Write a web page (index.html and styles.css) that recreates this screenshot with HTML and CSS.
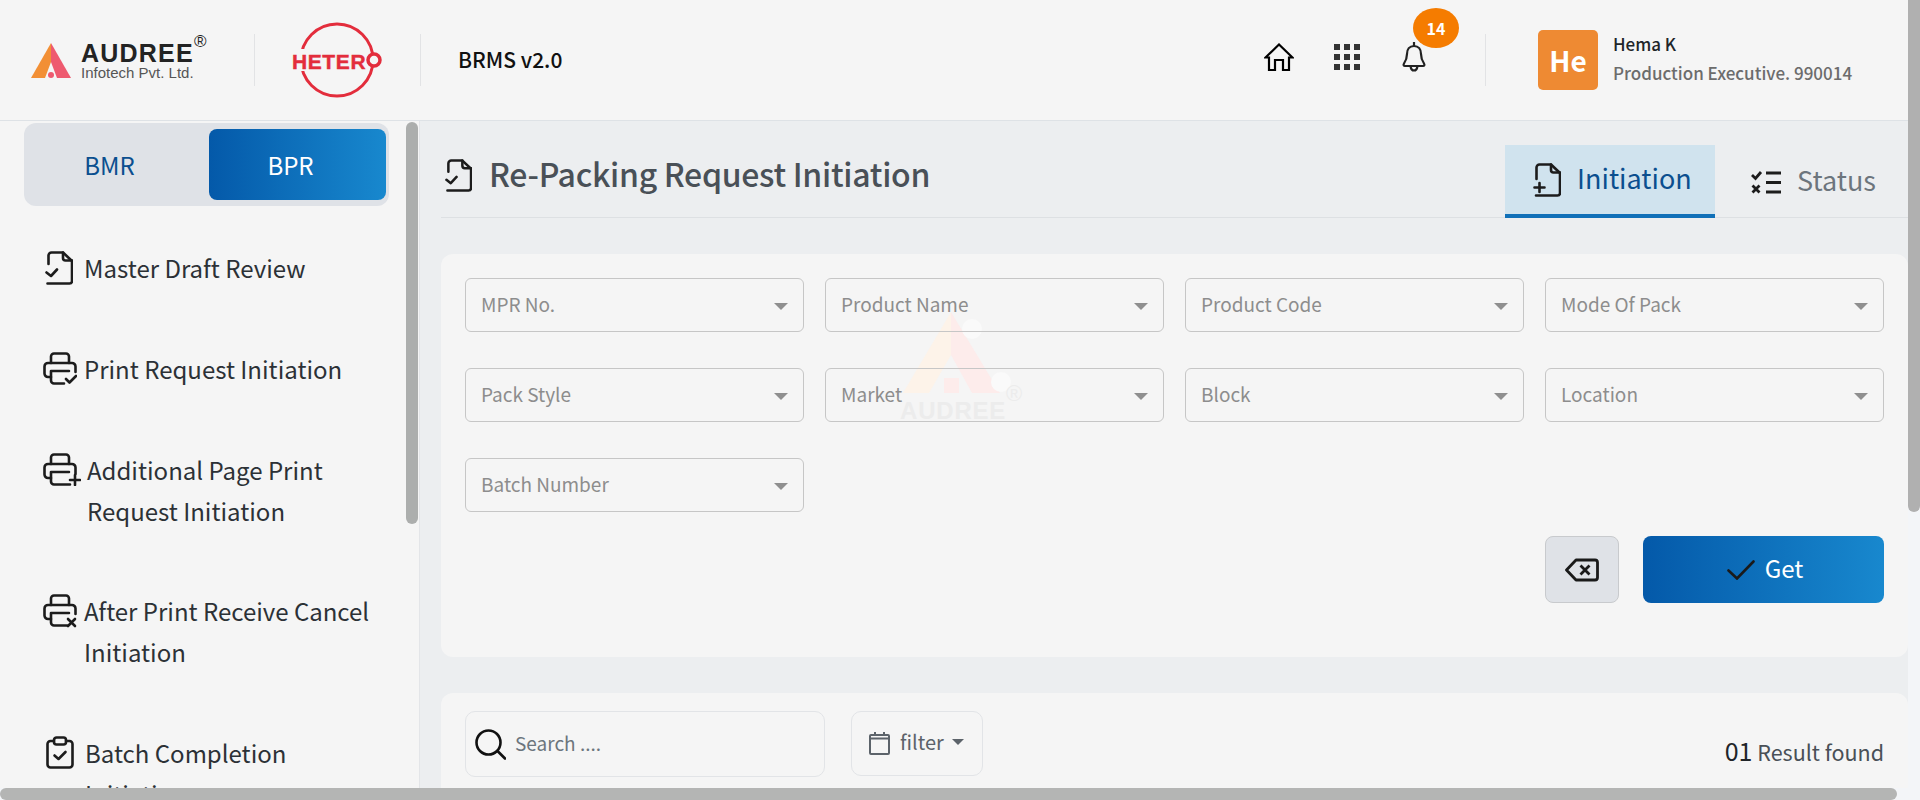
FILE: index.html
```html
<!DOCTYPE html>
<html lang="en">
<head>
    <meta charset="UTF-8">
    <meta name="viewport" content="width=device-width, initial-scale=1.0">
    <title>BRMS v2.0</title>
    <link rel="stylesheet" href="styles.css">
</head>
<body>
    <div class="page">
        <header class="topbar">
            <div class="brand">
                <svg class="brand-mark" width="40" height="35" viewBox="0 0 40 35">
                    <polygon points="20,0 0,35 14,35 20,19" fill="#f28f35"/>
                    <polygon points="20,0 40,35 26,35 20,19" fill="#ee5a6f"/>
                    <circle cx="20" cy="32" r="3" fill="#ee5a6f"/>
                </svg>
                <div class="brand-text">
                    <div class="brand-name">AUDREE<span class="brand-reg">®</span></div>
                    <div class="brand-sub">Infotech Pvt. Ltd.</div>
                </div>
            </div>
            <div class="divider"></div>
            <div class="client-logo">
                <svg width="92" height="78" viewBox="0 0 92 78">
                    <ellipse cx="45" cy="39" rx="36" ry="36" fill="none" stroke="#e32d3c" stroke-width="3"/>
                    <rect x="0" y="28" width="76" height="22" fill="#f5f5f5"/>
                    <text x="0" y="48" class="client-text">HETER</text>
                    <circle cx="82" cy="39" r="6" fill="#f5f5f5" stroke="#e32d3c" stroke-width="3.500"/>
                </svg>
            </div>
            <div class="divider"></div>
            <div class="app-name">BRMS v2.0</div>

            <div class="top-icons">
                <svg width="30" height="28" viewBox="0 0 30 28" fill="none" stroke="#000" stroke-width="2.200" stroke-linejoin="miter">
                    <path d="M1.500 14.500 15 1.500l13.500 13H25V27h-6V17h-8v10H5V14.500z"/>
                </svg>
                <svg class="apps-icon" width="26" height="26" viewBox="0 0 26 26" fill="#333">
                    <rect width="6" height="6"/><rect x="10" width="6" height="6"/><rect x="20" width="6" height="6"/>
                    <rect y="10" width="6" height="6"/><rect x="10" y="10" width="6" height="6"/><rect x="20" y="10" width="6" height="6"/>
                    <rect y="20" width="6" height="6"/><rect x="10" y="20" width="6" height="6"/><rect x="20" y="20" width="6" height="6"/>
                </svg>
                <div class="bell">
                    <svg width="24" height="30" viewBox="0 0 24 30" fill="none" stroke="#222" stroke-width="2.200">
                        <path d="M12 0v4"/>
                        <path d="M12 4c-4.500 0-7 3.500-7 8 0 4.500-1 6.500-3 9.500-.9 1.400-.3 2.500 1 2.500h18c1.300 0 1.900-1.100 1-2.500-2-3-3-5-3-9.500 0-4.500-2.500-8-7-8z"/>
                        <path d="M8.500 24c.3 2.500 1.700 4.500 3.500 4.500s3.200-2 3.500-4.500"/>
                    </svg>
                    <span class="badge">14</span>
                </div>
            </div>
            <div class="divider"></div>
            <div class="user">
                <div class="avatar">He</div>
                <div class="user-info">
                    <div class="user-name">Hema K</div>
                    <div class="user-role">Production Executive. 990014</div>
                </div>
            </div>
        </header>

        <div class="content">
            <aside class="sidebar">
                <div class="switch">
                    <div class="switch-item">BMR</div>
                    <div class="switch-item active">BPR</div>
                </div>
                <ul class="menu">
                    <li class="menu-item">
                        <svg class="menu-icon doc" width="28" height="34" viewBox="0 0 28 34" fill="none" stroke="#1c1c1c" stroke-width="2.600" stroke-linecap="round" stroke-linejoin="round">
                            <path d="M3.500 13V4.500a3 3 0 0 1 3-3H18l9 8.500v20a2.500 2.500 0 0 1-2.500 2.500H2.500"/>
                            <path d="M18 1.500V7a2.500 2.500 0 0 0 2.500 2.500H27"/>
                            <path d="M1.500 21.500 6 25l6-6.500"/>
                        </svg>
                        <span>Master Draft Review</span>
                    </li>
                    <li class="menu-item">
                        <svg class="menu-icon printer" width="34" height="33" viewBox="0 0 34 33" fill="none" stroke="#1c1c1c" stroke-width="2.600" stroke-linecap="round" stroke-linejoin="round">
                            <path d="M8 11V4.500A3 3 0 0 1 11 1.500h12a3 3 0 0 1 3 3V11"/>
                            <path d="M8 25H5a3.500 3.500 0 0 1-3.500-3.500v-7A3.500 3.500 0 0 1 5 11h24a3.500 3.500 0 0 1 3.500 3.500V20"/>
                            <path d="M26 19H8v9.500a3 3 0 0 0 3 3h10"/>
                            <path d="M23 27l3.500 3.500L33 24"/>
                        </svg>
                        <span>Print Request Initiation</span>
                    </li>
                    <li class="menu-item plus">
                        <svg class="menu-icon printer" width="38" height="33" viewBox="0 0 38 33" fill="none" stroke="#1c1c1c" stroke-width="2.600" stroke-linecap="round" stroke-linejoin="round">
                            <path d="M8 11V4.500A3 3 0 0 1 11 1.500h12a3 3 0 0 1 3 3V11"/>
                            <path d="M8 25H5a3.500 3.500 0 0 1-3.500-3.500v-7A3.500 3.500 0 0 1 5 11h24a3.500 3.500 0 0 1 3.500 3.500V21"/>
                            <path d="M26 19H8v9.500a3 3 0 0 0 3 3h16"/>
                            <path d="M32 22v10M27 27h10"/>
                        </svg>
                        <span>Additional Page Print Request Initiation</span>
                    </li>
                    <li class="menu-item">
                        <svg class="menu-icon printer" width="34" height="34" viewBox="0 0 34 34" fill="none" stroke="#1c1c1c" stroke-width="2.600" stroke-linecap="round" stroke-linejoin="round">
                            <path d="M8 11V4.500A3 3 0 0 1 11 1.500h12a3 3 0 0 1 3 3V11"/>
                            <path d="M8 25H5a3.500 3.500 0 0 1-3.500-3.500v-7A3.500 3.500 0 0 1 5 11h24a3.500 3.500 0 0 1 3.500 3.500V20"/>
                            <path d="M26 19H8v9.500a3 3 0 0 0 3 3h13"/>
                            <path d="M25 25l7 7M32 25l-7 7"/>
                        </svg>
                        <span>After Print Receive Cancel Initiation</span>
                    </li>
                    <li class="menu-item">
                        <svg class="menu-icon clip" width="28" height="33" viewBox="0 0 28 33" fill="none" stroke="#1c1c1c" stroke-width="2.600" stroke-linecap="round" stroke-linejoin="round">
                            <path d="M8 5H4.500a3 3 0 0 0-3 3v20.500a3 3 0 0 0 3 3h19a3 3 0 0 0 3-3V8a3 3 0 0 0-3-3H20"/>
                            <rect x="8" y="1.500" width="12" height="7" rx="2.500"/>
                            <path d="M8.500 19.500l4 3.500 7-7"/>
                        </svg>
                        <span>Batch Completion Initiation</span>
                    </li>
                </ul>
                <div class="side-thumb"></div>
            </aside>

            <main class="main">
                <div class="watermark">
                    <svg width="98" height="81" viewBox="0 0 98 81">
                        <polygon points="48,0 0,81 26,81 48,43" fill="#fdf3e9"/>
                        <polygon points="48,0 97,81 69,81 48,43" fill="#fdeceb"/>
                        <rect x="41" y="66" width="15" height="15" fill="#fdeceb"/>
                        <circle cx="69" cy="17" r="10" fill="#fafafa"/>
                        <circle cx="98" cy="70" r="10" fill="#fafafa"/>
                    </svg>
                    <div class="watermark-name">AUDREE<span class="watermark-reg">®</span></div>
                </div>

                <div class="title-bar">
                    <h1 class="page-title">
                        <svg width="27" height="33" viewBox="0 0 28 34" fill="none" stroke="#1c1c1c" stroke-width="2.600" stroke-linecap="round" stroke-linejoin="round">
                            <path d="M3.500 13V4.500a3 3 0 0 1 3-3H18l9 8.500v20a2.500 2.500 0 0 1-2.500 2.500H2.500"/>
                            <path d="M18 1.500V7a2.500 2.500 0 0 0 2.500 2.500H27"/>
                            <path d="M1.500 21.500 6 25l6-6.500"/>
                        </svg>
                        <span>Re-Packing Request Initiation</span>
                    </h1>
                    <div class="tabs">
                        <div class="tab active">
                            <svg width="28" height="34" viewBox="0 0 28 34" fill="none" stroke="#1c1c1c" stroke-width="2.600" stroke-linecap="round" stroke-linejoin="round">
                                <path d="M3.500 16V4.500a3 3 0 0 1 3-3H18l9 8.500v20a2.500 2.500 0 0 1-2.500 2.500H3"/>
                                <path d="M18 1.500V7a2.500 2.500 0 0 0 2.500 2.500H27"/>
                                <path d="M6.500 20v9M1.500 24.500h10"/>
                            </svg>
                            <span>Initiation</span>
                        </div>
                        <div class="tab">
                            <svg width="30" height="24" viewBox="0 0 30 24" fill="none" stroke="#1c1c1c" stroke-width="2.800">
                                <path d="M1 5l3.500 3.500L10 2"/>
                                <path d="M1.500 15.500l7 7M8.500 15.500l-7 7"/>
                                <path d="M15 3h15M15 12.500h15M15 22h15"/>
                            </svg>
                            <span>Status</span>
                        </div>
                    </div>
                </div>

                <section class="card filter-card">
                    <div class="fields">
                        <div class="field">MPR No.</div>
                        <div class="field">Product Name</div>
                        <div class="field">Product Code</div>
                        <div class="field">Mode Of Pack</div>
                        <div class="field">Pack Style</div>
                        <div class="field">Market</div>
                        <div class="field">Block</div>
                        <div class="field">Location</div>
                        <div class="field">Batch Number</div>
                    </div>
                    <div class="actions">
                        <button class="btn-clear">
                            <svg width="34" height="24" viewBox="0 0 34 24" fill="none" stroke="#1a1a1a" stroke-width="2.800" stroke-linejoin="round">
                                <path d="M11 2h19a2.500 2.500 0 0 1 2.500 2.500v15A2.500 2.500 0 0 1 30 22H11L1.500 12z"/>
                                <path d="M15.500 7.500l9 9M24.500 7.500l-9 9"/>
                            </svg>
                        </button>
                        <button class="btn-get">
                            <svg width="28" height="20" viewBox="0 0 28 20" fill="none" stroke="#1a1a1a" stroke-width="2.600" stroke-linecap="round">
                                <path d="M1.500 10.500 10 18.500 26.500 1.500"/>
                            </svg>
                            <span>Get</span>
                        </button>
                    </div>
                </section>

                <section class="card list-card">
                    <div class="search-box">
                        <svg width="31" height="31" viewBox="0 0 31 31" fill="none" stroke="#111" stroke-width="2.600" stroke-linecap="round">
                            <circle cx="13.500" cy="13.500" r="12"/>
                            <path d="M22.500 22 30 29.500"/>
                        </svg>
                        <span>Search ....</span>
                    </div>
                    <div class="filter-btn">
                        <svg width="21" height="23" viewBox="0 0 21 23" fill="none" stroke="#5c636a" stroke-width="2">
                            <path d="M1 6.500V21a1 1 0 0 0 1 1h17a1 1 0 0 0 1-1V6.500zM1 6.500V4a1 1 0 0 1 1-1h17a1 1 0 0 1 1 1v2.500"/>
                            <path d="M6 0v4M15 0v4"/>
                        </svg>
                        <span>filter</span>
                        <i class="caret"></i>
                    </div>
                    <div class="result"><b>01</b> Result found</div>
                </section>
            </main>
        </div>
    </div>
    <!-- custom scrollbars of the page -->
    <div class="page-thumb-v"></div>
    <div class="page-thumb-h"></div>
</body>
</html>
```

FILE: styles.css
```css
* {
    box-sizing: border-box;
}
html, body {
    margin: 0;
    height: 800px;
    overflow: hidden;
}
body {
    font-family: "Noto Sans CJK JP", "Noto Sans", sans-serif;
    background-color: #f3f5f8;
    color: #212529;
    position: relative;
}
.page {
    width: 1908px;
    height: 788px;
    overflow: hidden;
}

/* Top bar */
.topbar {
    height: 121px;
    display: flex;
    align-items: center;
    background-color: #f5f5f5;
    border-bottom: 1px solid #dee2e6;
    padding-left: 31px;
}
.brand {
    width: 223px;
    display: flex;
    align-items: flex-end;
    gap: 10px;
}
.brand-mark {
    margin-bottom: 2px;
}
.brand-name {
    font-family: "Liberation Sans", sans-serif;
    font-weight: 700;
    font-size: 25px;
    letter-spacing: 1.2px;
    line-height: 24px;
    color: #232323;
    position: relative;
}
.brand-reg {
    position: absolute;
    left: 113px;
    top: -11px;
    font-size: 17px;
    font-weight: 400;
    letter-spacing: 0;
}
.brand-sub {
    font-family: "Liberation Sans", sans-serif;
    font-size: 15px;
    line-height: 15px;
    color: #555;
}
.divider {
    width: 1px;
    height: 52px;
    background-color: #e2e3e5;
    flex: none;
}
.client-logo {
    width: 165px;
    padding-left: 37px;
    display: flex;
}
.client-text {
    font-family: "Liberation Sans", sans-serif;
    font-weight: 700;
    font-size: 21px;
    letter-spacing: 0.6px;
    fill: #e32d3c;
    stroke: #e32d3c;
    stroke-width: 0.4px;
}
.app-name {
    margin-left: 37px;
    margin-bottom: 2px;
    font-size: 21px;
    font-weight: 500;
    color: #111;
}
.top-icons {
    margin-left: auto;
    display: flex;
    align-items: center;
    gap: 40px;
    margin-right: 59px;
    padding-bottom: 7px;
}
.apps-icon {
    margin-right: 2px;
}
.bell {
    position: relative;
    display: flex;
}
.badge {
    position: absolute;
    left: 11px;
    top: -34px;
    width: 46px;
    height: 40px;
    border-radius: 50%;
    background-color: #f57c00;
    color: #fff;
    font-size: 16px;
    font-weight: 700;
    display: flex;
    align-items: center;
    justify-content: center;
}
.user {
    display: flex;
    align-items: center;
    gap: 15px;
    margin-left: 52px;
    width: 370px;
}
.avatar {
    width: 60px;
    height: 60px;
    border-radius: 5px;
    background-color: #ee8a33;
    color: #fff;
    font-size: 28px;
    font-weight: 700;
    display: flex;
    align-items: center;
    justify-content: center;
}
.user-info {
    margin-top: -2px;
}
.user-name {
    font-size: 17px;
    font-weight: 500;
    line-height: 28px;
    color: #212529;
}
.user-role {
    font-size: 17px;
    font-weight: 500;
    line-height: 30px;
    color: #6c6c6c;
}

/* Sidebar */
.content {
    display: flex;
    height: 667px;
}
.sidebar {
    width: 420px;
    flex: none;
    background-color: #f5f5f5;
    border-right: 1px solid #e3e5e8;
    position: relative;
    overflow: hidden;
    padding-left: 24px;
}
.switch {
    width: 365px;
    height: 83px;
    margin-top: 2px;
    padding: 6px 3px 6px 0;
    background-color: #dfe2e7;
    border-radius: 12px;
    display: flex;
}
.switch-item {
    width: 173px;
    margin-left: 6px;
    padding-right: 14px;
    border-radius: 8px;
    font-size: 24px;
    color: #0b4f8f;
    display: flex;
    align-items: center;
    justify-content: center;
}
.switch-item.active {
    width: 177px;
    color: #fff;
    background: linear-gradient(90deg, #0459a9, #1888ce);
}
.menu {
    list-style: none;
    margin: 41px 0 0;
    padding: 0 0 0 19px;
    width: 362px;
}
.menu-item {
    display: flex;
    align-items: flex-start;
    gap: 11px;
    font-size: 24px;
    line-height: 41px;
    color: #2c3136;
    margin-bottom: 60px;
}
.menu-item.plus {
    margin-bottom: 59px;
}
.menu-item span {
    flex: 1;
}
.menu-icon {
    flex: none;
    margin-top: 4px;
}
.menu-icon.doc {
    margin-left: 2px;
}
.menu-icon.printer {
    margin-right: -4px;
}
.menu-item.plus .menu-icon.printer {
    margin-right: -5px;
}
.menu-icon.clip {
    margin-left: 3px;
}
.side-thumb {
    position: absolute;
    left: 406px;
    top: 1px;
    width: 12px;
    height: 402px;
    border-radius: 6px;
    background-color: #acaead;
}

/* Main area */
.main {
    flex: 1;
    min-width: 0;
    padding-left: 21px;
    background-color: #eceef0;
    position: relative;
    overflow: hidden;
    z-index: 0;
}
.watermark {
    position: absolute;
    left: 483px;
    top: 191px;
    width: 125px;
}
.watermark svg {
    display: block;
    overflow: visible;
}
.watermark-name {
    font-family: "Liberation Sans", sans-serif;
    font-weight: 700;
    font-size: 24px;
    letter-spacing: 0.8px;
    line-height: 20px;
    margin: 8px 0 0 -3px;
    color: #ececec;
    position: relative;
}
.watermark-reg {
    position: absolute;
    left: 106px;
    top: -17px;
    font-size: 22px;
    font-weight: 400;
    letter-spacing: 0;
}
.title-bar {
    height: 97px;
    padding-top: 24px;
    display: flex;
    justify-content: space-between;
    border-bottom: 1px solid #dde0e3;
}
.page-title {
    margin: 0;
    padding: 3px 0 0 4px;
    display: flex;
    gap: 17px;
    align-items: flex-start;
    font-size: 32px;
    letter-spacing: -0.3px;
    font-weight: 500;
    line-height: 50px;
    color: #495057;
}
.page-title svg {
    flex: none;
    margin-top: 11px;
}
.tabs {
    display: flex;
    margin-right: 32px;
}
.tab {
    height: 73px;
    display: flex;
    align-items: center;
    gap: 16px;
    padding-left: 28px;
    font-size: 27px;
    color: #6c757d;
}
.tab svg {
    flex: none;
}
.tab span {
    padding-bottom: 5px;
}
.tab.active {
    width: 210px;
    margin-right: 8px;
    color: #0b4f8f;
    background-color: #d0e3ee;
    border-bottom: 4px solid #1070b8;
}
.card {
    background-color: #f5f5f5;
    border-radius: 12px;
    margin-top: 36px;
    padding-left: 24px;
    padding-right: 24px;
}
.filter-card {
    height: 403px;
    padding-top: 24px;
    position: relative;
    background-color: transparent;
}
.filter-card::before {
    content: "";
    position: absolute;
    inset: 0;
    background-color: #f5f5f5;
    border-radius: 12px;
    z-index: -1;
}
.fields {
    display: grid;
    grid-template-columns: repeat(4, 1fr);
    gap: 36px 21px;
}
.field {
    height: 54px;
    border: 1px solid #c6c6c6;
    border-radius: 6px;
    padding-left: 15px;
    font-size: 19px;
    line-height: 50px;
    color: #8d8d8d;
    position: relative;
}
.field::after {
    content: "";
    position: absolute;
    right: 15px;
    top: 24px;
    border-left: 7px solid transparent;
    border-right: 7px solid transparent;
    border-top: 7px solid #8f8f8f;
}
.actions {
    display: flex;
    justify-content: flex-end;
    gap: 24px;
    margin-top: 24px;
}
button {
    font-family: inherit;
    cursor: pointer;
}
.btn-clear {
    width: 74px;
    height: 67px;
    background-color: #dfe2e7;
    border: 1px solid #c8cacd;
    border-radius: 8px;
    display: flex;
    align-items: center;
    justify-content: center;
    padding: 0;
}
.btn-get {
    width: 241px;
    height: 67px;
    border: none;
    border-radius: 8px;
    padding: 0 0 0 3px;
    background: linear-gradient(90deg, #0459a9, #1888ce);
    color: #fff;
    font-size: 24px;
    display: flex;
    align-items: center;
    justify-content: center;
    gap: 10px;
}
.btn-get span {
    padding-bottom: 4px;
}
.list-card {
    height: 200px;
    padding-top: 18px;
    display: flex;
    align-items: flex-start;
}
.search-box {
    width: 360px;
    height: 66px;
    border: 1px solid #e2e4e7;
    border-radius: 10px;
    display: flex;
    align-items: center;
    gap: 9px;
    padding-left: 9px;
    font-size: 19px;
    color: #6c757d;
}
.search-box span {
    padding-bottom: 4px;
}
.filter-btn {
    width: 132px;
    height: 65px;
    margin-left: 26px;
    border: 1px solid #e2e4e7;
    border-radius: 10px;
    display: flex;
    align-items: center;
    padding-left: 17px;
    gap: 10px;
    font-size: 20px;
    color: #5c636a;
}
.filter-btn span {
    padding-bottom: 5px;
}
.caret {
    margin-left: -2px;
    margin-bottom: 4px;
    border-left: 6px solid transparent;
    border-right: 6px solid transparent;
    border-top: 6px solid #5c636a;
}
.result {
    margin-left: auto;
    margin-top: 21px;
    font-size: 21.500px;
    line-height: 36px;
    color: #495057;
}
.result b {
    font-size: 25px;
    font-weight: 400;
    color: #212529;
}

/* Page scrollbars */
.page-thumb-v {
    position: absolute;
    top: 0;
    left: 1908px;
    width: 12px;
    height: 512px;
    border-radius: 0 0 6px 6px;
    background-color: #b0b0b0;
}
.page-thumb-h {
    position: absolute;
    top: 788px;
    left: 0;
    width: 1897px;
    height: 12px;
    border-radius: 6px;
    background-color: #b4b5b4;
}
```
